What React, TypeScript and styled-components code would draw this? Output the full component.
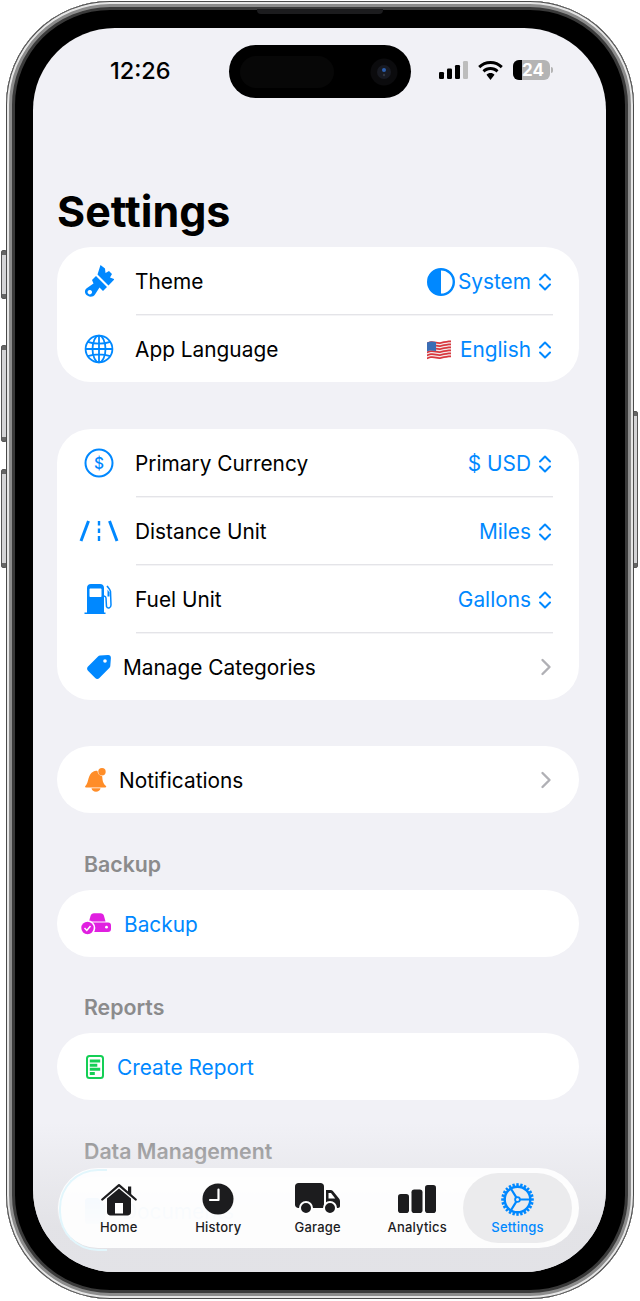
import React from "react";
import styled, { createGlobalStyle } from "styled-components";

const BLUE = "#0088ff";
const FONT = `Inter, "Noto Sans", "Liberation Sans", sans-serif`;

const Global = createGlobalStyle`
  html, body { margin: 0; padding: 0; background: #fff; }
  #root { width: 640px; height: 1301px; overflow: hidden; }
  * { box-sizing: border-box; }
`;

const Stage = styled.div`
  position: relative;
  width: 640px;
  height: 1301px;
  padding: 1px 6px 2px 6px;
  font-family: ${FONT};
  background: #fff;
`;

const SideButton = styled.div<{ $top: number; $height: number; $right?: boolean }>`
  position: absolute;
  top: ${(p) => p.$top}px;
  height: ${(p) => p.$height}px;
  ${(p) => (p.$right ? "right: 2px;" : "left: 1px;")}
  width: 6px;
  background: linear-gradient(#666 0 4px, #d4d4d6 4px calc(100% - 4px), #666 calc(100% - 4px));
  border: 1px solid #555;
  border-radius: 2px;
`;

const Frame = styled.div`
  position: relative;
  height: 100%;
  padding: 27px 28px 27px 27px;
  border-radius: 104px;
  background: #000;
  box-shadow: inset 0 0 0 1px #4a4a4a, inset 0 0 0 3px #e6e6e6, inset 0 0 0 6px #8c8c8c, inset 0 0 0 9px #3a3a3a;
`;

const Speaker = styled.div`
  position: absolute;
  top: 8px;
  left: 251px;
  width: 126px;
  height: 5px;
  background: #1c1c1e;
  border-radius: 0 0 4px 4px;
`;

const Screen = styled.div`
  position: relative;
  height: 100%;
  overflow: hidden;
  border-radius: 82px;
  background: #f1f1f6;
`;

const Island = styled.div`
  position: absolute;
  top: 17px;
  left: 196px;
  width: 182px;
  height: 53px;
  display: flex;
  align-items: center;
  justify-content: space-between;
  padding: 0 13px 0 11px;
  border-radius: 27px;
  background: #000;
`;

const IslandShade = styled.div`
  width: 94px;
  height: 32px;
  border-radius: 16px;
  background: #070707;
`;

const StatusBar = styled.div`
  height: 86px;
  display: flex;
  align-items: center;
  padding: 0 53px 0 77px;
  justify-content: space-between;
`;

const Clock = styled.div`
  font-size: 23.5px;
  font-weight: 500;
  letter-spacing: 0;
  color: #000;
  margin-top: -2px;
`;

const StatusIcons = styled.div`
  display: flex;
  align-items: center;
  gap: 10px;
  margin-top: -2px;
`;

const Battery = styled.div`
  position: relative;
  width: 37px;
  height: 20px;
  border-radius: 6px;
  overflow: hidden;
  background: #b4b4b4;
  color: #fff;
  font-size: 17px;
  font-weight: 700;
  line-height: 20px;
  text-align: center;
  padding-left: 3px;
`;

const BatteryFill = styled.div`
  position: absolute;
  left: 0;
  top: 0;
  bottom: 0;
  width: 9px;
  background: #000;
`;

const BatteryCap = styled.div`
  width: 2px;
  height: 6px;
  margin-left: -9px;
  border-radius: 0 2px 2px 0;
  background: #b4b4b4;
`;

const Content = styled.div`
  padding: 0 27px 0 24px;
`;

const Title = styled.h1`
  margin: 0 0 10px;
  height: 123px;
  display: flex;
  align-items: flex-end;
  font-size: 43px;
  line-height: 52px;
  font-weight: 700;
  letter-spacing: 0;
  color: #000;
`;

const Card = styled.div<{ $gap?: number }>`
  margin-bottom: ${(p) => p.$gap ?? 0}px;
  background: #fff;
  border-radius: 34px;
`;

const Row = styled.div<{ $inset: number; $gap: number }>`
  height: 67px;
  display: flex;
  align-items: center;
  padding: 0 27px 0 ${(p) => p.$inset}px;
  gap: ${(p) => p.$gap}px;
`;

const IconSlot = styled.div<{ $w: number }>`
  width: ${(p) => p.$w}px;
  flex: none;
  display: flex;
  justify-content: center;
  align-items: center;
  svg { display: block; flex: none; }
`;

const Label = styled.span<{ $blue?: boolean }>`
  flex: 1;
  padding-top: 3px;
  font-size: 20.85px;
  line-height: 26px;
  color: ${(p) => (p.$blue ? BLUE : "#000")};
`;

const Value = styled.span`
  display: flex;
  align-items: center;
  padding-top: 3px;
  font-size: 20.85px;
  line-height: 26px;
  color: ${BLUE};
`;

const ValueIcon = styled.span<{ $gap: number }>`
  display: flex;
  margin-right: ${(p) => p.$gap}px;
`;

const Trail = styled.span`
  display: flex;
  width: 21px;
  justify-content: flex-end;
  flex: none;
`;

const Divider = styled.div`
  height: 1px;
  margin: 0 26px 0 79px;
  background: #e4e4e8;
  box-shadow: 0 1px 0 #f4f4f6;
`;

const Section = styled.div<{ $top: number }>`
  margin: ${(p) => p.$top}px 0 14px 27px;
  font-size: 21.3px;
  line-height: 24px;
  font-weight: 600;
  color: #8b8b8c;
`;

const BottomFade = styled.div`
  position: absolute;
  left: 0;
  right: 0;
  bottom: 0;
  height: 150px;
  background: linear-gradient(rgba(226, 226, 230, 0), rgba(226, 226, 230, 0.95) 70%);
`;

const TabBar = styled.nav`
  position: absolute;
  left: 25px;
  top: 1140px;
  width: 521px;
  height: 80px;
  padding: 5px 6px 5px 11px;
  display: grid;
  grid-template-columns: repeat(5, 99.5px);
  border-radius: 40px;
  background: rgba(255, 255, 255, 0.9);
  &::before {
    content: "";
    position: absolute;
    left: 1px;
    top: 1px;
    width: 46px;
    height: 78px;
    border: 2px solid #e2f6fc;
    border-right: none;
    border-radius: 39px 0 0 39px;
  }
`;

const Tab = styled.div<{ $active?: boolean }>`
  position: relative;
  display: flex;
  flex-direction: column;
  align-items: center;
  padding-top: 10px;
  border-radius: 35px;
  margin: ${(p) => (p.$active ? "0 -5.5px 0 -4px" : "0")};
  background: ${(p) => (p.$active ? "#ebebed" : "transparent")};
  color: ${(p) => (p.$active ? BLUE : "#1c1c1e")};
`;

const TabIcon = styled.div`
  height: 32px;
  display: flex;
  align-items: center;
  justify-content: center;
  svg { display: block; }
`;

const TabLabel = styled.span`
  margin-top: 3px;
  font-size: 13px;
  line-height: 18px;
  font-weight: 500;
  letter-spacing: 0.2px;
`;

const UpDown = () => (
  <svg width="14" height="20" viewBox="0 0 14 20" fill="none" stroke={BLUE} strokeWidth="2" strokeLinecap="round" strokeLinejoin="round">
    <path d="M2 7.500 7 2.500l5 5M2 12.500l5 5 5-5" />
  </svg>
);

const Chevron = () => (
  <svg width="12" height="18" viewBox="0 0 12 18" fill="none" stroke="#b0b0b5" strokeWidth="2.400" strokeLinecap="round" strokeLinejoin="round">
    <path d="M2.500 2 9.500 9l-7 7" />
  </svg>
);

const Brush = () => (
  <svg width="30" height="32" viewBox="0 0 30 32" fill={BLUE}>
    <path d="M16.500 0 21 3.500l.5 4.500 3.500-2 3 3-2 3.500 4.500 1.700L24.500 20.500 13.500 9.500z" />
    <path d="M12 11 23 22l-4 4-3.500-3.500-4.500 7c-1.600 2.400-5 3-7.300 1.200C.2 28.800.2 25.200 2.700 23.300L9.500 18.500 8 15zM5.800 25a2.200 2.200 0 1 0 .01 0z" fillRule="evenodd" />
  </svg>
);

const Globe = () => (
  <svg width="30" height="30" viewBox="0 0 30 30" fill="none" stroke={BLUE} strokeWidth="1.800">
    <circle cx="15" cy="15" r="13.400" />
    <ellipse cx="15" cy="15" rx="6.500" ry="13.400" />
    <path d="M15 1.600v26.800M1.600 15h26.800M3.800 7.800c6.500 2.500 15.900 2.500 22.400 0M3.800 22.200c6.500-2.500 15.900-2.500 22.400 0" />
  </svg>
);

const HalfCircle = () => (
  <svg width="28" height="28" viewBox="0 0 28 28">
    <circle cx="14" cy="14" r="12.800" fill="#fff" stroke={BLUE} strokeWidth="2.400" />
    <path d="M14 1a13 13 0 0 0 0 26z" fill={BLUE} />
  </svg>
);

const Flag = () => {
  const stripes = Array.from({ length: 6 }, (_, i) => i * 3);
  return (
    <svg width="24" height="20" viewBox="0 0 24 20">
      <path d="M0 2.500C6-.5 10 3 14 2s7-1.500 10-1.500V17c-4 0-6 1.500-10 2S5 16 0 18.500z" fill="#f4e8e8" />
      {stripes.map((y) => (
        <path key={y} d={`M0 ${y + 2.5}C6 ${y - 0.5} 10 ${y + 3} 14 ${y + 2}s7-1.500 10-1.500v1.700c-3 0-6 .5-10 1.500s-8-2.500-14 .5z`} fill="#d8383f" />
      ))}
      <path d="M0 2.500C3 1 5.500 1.200 9 2v9c-4-.7-6-1-9 .5z" fill="#3a6db5" />
    </svg>
  );
};

const Dollar = () => (
  <svg width="30" height="30" viewBox="0 0 30 30" fill="none" stroke={BLUE}>
    <circle cx="15" cy="15" r="13.500" strokeWidth="2" />
    <text x="15" y="20.500" textAnchor="middle" fontSize="15.500" fontFamily={FONT} fontWeight="500" fill={BLUE} stroke="none">$</text>
  </svg>
);

const Road = () => (
  <svg width="40" height="22" viewBox="0 0 40 22" fill="none" stroke={BLUE} strokeLinecap="butt">
    <path d="M9.500 1 2 21M30.500 1 38 21" strokeWidth="3" />
    <path d="M20 1v4.500M20 8.500v4.500M20 16v5" strokeWidth="2.400" />
  </svg>
);

const Fuel = () => (
  <svg width="30" height="32" viewBox="0 0 30 32">
    <path d="M3 5c0-2.500 1.500-4 4-4h9c2.500 0 4 1.500 4 4v24.500h1.500V31H.5v-1.500H3z" fill={BLUE} />
    <path d="M6.500 5.500h10c.6 0 1 .4 1 1V13c0 .6-.4 1-1 1h-10c-.6 0-1-.4-1-1V6.500c0-.6.4-1 1-1z" fill="#fff" />
    <path d="M23 3c1.500 2 3 3 3.500 5.500L27 22c0 3.500-3.500 4-4.500 1.500L22 15c0-1-.8-1.800-2-2" fill="none" stroke={BLUE} strokeWidth="1.500" />
    <path d="M23.500 6.500l2 3v4h-2z" fill={BLUE} />
  </svg>
);

const Tag = () => (
  <svg width="26" height="26" viewBox="0 0 26 26">
    <path d="M14 1.500 22 1c1.800-.1 3 1.200 2.900 3l-.6 8c0 .8-.4 1.500-1 2.100L13.400 24c-1.200 1.200-3 1.200-4.200 0L2 16.800c-1.200-1.200-1.200-3 0-4.200l10-10c.6-.6 1.300-1 2-1.100z" fill={BLUE} />
    <circle cx="19" cy="7" r="1.800" fill="#fff" />
  </svg>
);

const Bell = () => (
  <svg width="22" height="24" viewBox="0 0 22 24" fill="#ff8d28">
    <path d="M8.500 3.500c1.200-.6 2.500-.8 4-.5.200 2.700 2 4.800 4.700 5.200.4 4.300.5 7 3.800 9.800.5.500.2 1.500-.6 1.500H1c-.9 0-1.200-1-.6-1.500C4 14.500 2.500 6.500 8.500 3.500z" />
    <circle cx="17" cy="3.700" r="3.700" />
    <path d="M6.500 20.200h9c-.3 2-2.300 3.500-4.500 3.500s-4.200-1.500-4.500-3.500z" />
  </svg>
);

const BackupIcon = () => (
  <svg width="30" height="22" viewBox="0 0 30 22">
    <path d="M9.500 3c.5-1.800 1.800-2.800 3.500-2.800h6.500c1.800 0 3 1 3.500 2.800l1.500 5.500H8z" fill="#e01fe0" />
    <rect x="6" y="9.500" width="24" height="9.500" rx="3" fill="#e01fe0" />
    <circle cx="25.500" cy="14.200" r="1.400" fill="#fff" />
    <circle cx="6.500" cy="15" r="7.800" fill="#fff" />
    <circle cx="6.500" cy="15" r="6.200" fill="#e01fe0" />
    <path d="M3.500 15l2.300 2.400 3.700-4.400" fill="none" stroke="#fff" strokeWidth="1.500" />
  </svg>
);

const ReportIcon = () => (
  <svg width="18" height="24" viewBox="0 0 18 24">
    <rect x="1" y="1" width="16" height="22" rx="2.500" fill="#fff" stroke="#14cf55" strokeWidth="2" />
    <path d="M3.800 4.500h10.400v3H3.800zM3.800 8.800h7.500v3H3.800zM3.800 12.800h10.400v3H3.800zM3.800 17h5v3h-5z" fill="#14cf55" />
  </svg>
);

const DocIcon = () => (
  <svg width="20" height="26" viewBox="0 0 20 26">
    <path d="M3 0h10l7 7v16c0 1.700-1.300 3-3 3H3c-1.700 0-3-1.300-3-3V3c0-1.700 1.300-3 3-3z" fill={BLUE} />
  </svg>
);

const Home = () => (
  <svg width="36" height="33" viewBox="0 0 36 33">
    <path d="M6 15.500 18 5.500l12 10V29c0 2.200-1.500 3.500-3.500 3.500h-17C7.500 32.500 6 31.200 6 29z" fill="#1c1c1e" />
    <rect x="14" y="20" width="8" height="10.500" fill="#fff" />
    <path d="M1.300 16.500 18 2.200l16.700 14.300" fill="none" stroke="#1c1c1e" strokeWidth="2.300" strokeLinecap="round" strokeLinejoin="round" />
    <path d="M27 3.500h3.200v8.500L27 9.500z" fill="#1c1c1e" />
  </svg>
);

const ClockIcon = () => (
  <svg width="32" height="32" viewBox="0 0 32 32">
    <circle cx="16" cy="16" r="15.500" fill="#1c1c1e" />
    <path d="M16.500 6.500V17H8" fill="none" stroke="#fff" strokeWidth="2.200" strokeLinecap="round" strokeLinejoin="round" />
  </svg>
);

const Truck = () => (
  <svg width="46" height="32" viewBox="0 0 46 32">
    <path d="M3.500 0h22C27.500 0 29 1.500 29 3.500V25H3.500C1.500 25 0 23.500 0 21.500v-18C0 1.500 1.500 0 3.500 0z" fill="#1c1c1e" />
    <path d="M31 7h4.500c1 0 1.800.4 2.400 1.100L44 15.500c.7.800 1 1.700 1 2.700V23c0 1.200-.8 2-2 2H31z" fill="#1c1c1e" />
    <path d="M33.500 10h2.500l4.200 5.500h-6.700z" fill="#fff" />
    <circle cx="11" cy="25" r="6" fill="#1c1c1e" stroke="#fff" strokeWidth="2" />
    <circle cx="35" cy="25" r="6" fill="#1c1c1e" stroke="#fff" strokeWidth="2" />
  </svg>
);

const Bars = () => (
  <svg width="38" height="28" viewBox="0 0 38 28" fill="#1c1c1e">
    <rect x="0" y="9" width="11" height="19" rx="2.800" />
    <rect x="13.500" y="4.500" width="11" height="23.500" rx="2.800" />
    <rect x="27" y="0" width="11" height="28" rx="2.800" />
  </svg>
);

const Gear = () => {
  const teeth = Array.from({ length: 24 }, (_, i) => i * 15);
  return (
    <svg width="33" height="33" viewBox="0 0 33 33" fill="none" stroke={BLUE}>
      {teeth.map((a) => (
        <rect key={a} x="15.300" y="0.200" width="2.400" height="4" fill={BLUE} stroke="none" transform={`rotate(${a} 16.500 16.500)`} />
      ))}
      <circle cx="16.500" cy="16.500" r="12.800" strokeWidth="2.400" />
      <circle cx="16.500" cy="16.500" r="2.400" strokeWidth="1.800" />
      <path d="M18.900 16.500H29M15.300 14.400 9.800 5.500M15.300 18.600 9.800 27.500" strokeWidth="2.200" />
    </svg>
  );
};

const Signal = () => (
  <svg width="29" height="18" viewBox="0 0 29 18">
    <rect x="0" y="11" width="5" height="7" rx="1.200" fill="#000" />
    <rect x="8" y="7.500" width="5" height="10.500" rx="1.200" fill="#000" />
    <rect x="16" y="4" width="5" height="14" rx="1.200" fill="#000" />
    <rect x="24" y="0" width="5" height="18" rx="1.200" fill="#bdbdbd" />
  </svg>
);

const Wifi = () => (
  <svg width="25" height="19" viewBox="0 0 25 19">
    <path d="M12.500 0C17.300 0 21.600 1.900 24.800 5l-2 2.200C20.100 4.600 16.500 3 12.500 3S4.900 4.600 2.200 7.200L.2 5C3.400 1.900 7.700 0 12.500 0z" />
    <path d="M12.500 6c3.100 0 5.900 1.200 8 3.200l-2 2.200c-1.500-1.500-3.600-2.400-6-2.400s-4.500.9-6 2.400l-2-2.200c2.100-2 4.900-3.200 8-3.200z" />
    <path d="M12.500 12c1.600 0 3 .6 4 1.700L12.500 19l-4-5.300c1-1.100 2.400-1.700 4-1.700z" />
  </svg>
);

const Camera = () => (
  <svg width="28" height="28" viewBox="0 0 28 28">
    <circle cx="14" cy="14" r="13.500" fill="#0b0b0d" />
    <circle cx="14" cy="14" r="7" fill="#181a22" />
    <circle cx="14" cy="12" r="2" fill="#2c5fb0" />
    <circle cx="14" cy="17" r="1.200" fill="#33363d" />
  </svg>
);

export default function App() {
  return (
    <Stage>
      <Global />
      <SideButton $top={250} $height={49} />
      <SideButton $top={345} $height={97} />
      <SideButton $top={469} $height={99} />
      <SideButton $right $top={411} $height={157} />
      <Frame>
        <Speaker />
        <Screen>
          <StatusBar>
            <Clock>12:26</Clock>
            <StatusIcons>
              <Signal />
              <Wifi />
              <Battery>
                <BatteryFill />
                24
              </Battery>
              <BatteryCap />
            </StatusIcons>
          </StatusBar>
          <Island>
            <IslandShade />
            <Camera />
          </Island>
          <Content>
            <Title>Settings</Title>
            <Card $gap={47}>
              <Row $inset={22} $gap={16}>
                <IconSlot $w={40}><Brush /></IconSlot>
                <Label>Theme</Label>
                <Value><ValueIcon $gap={3}><HalfCircle /></ValueIcon>System<Trail><UpDown /></Trail></Value>
              </Row>
              <Divider />
              <Row $inset={22} $gap={16}>
                <IconSlot $w={40}><Globe /></IconSlot>
                <Label>App Language</Label>
                <Value><ValueIcon $gap={9}><Flag /></ValueIcon>English<Trail><UpDown /></Trail></Value>
              </Row>
            </Card>
            <Card $gap={46}>
              <Row $inset={22} $gap={16}>
                <IconSlot $w={40}><Dollar /></IconSlot>
                <Label>Primary Currency</Label>
                <Value>$ USD<Trail><UpDown /></Trail></Value>
              </Row>
              <Divider />
              <Row $inset={22} $gap={16}>
                <IconSlot $w={40}><Road /></IconSlot>
                <Label>Distance Unit</Label>
                <Value>Miles<Trail><UpDown /></Trail></Value>
              </Row>
              <Divider />
              <Row $inset={22} $gap={16}>
                <IconSlot $w={40}><Fuel /></IconSlot>
                <Label>Fuel Unit</Label>
                <Value>Gallons<Trail><UpDown /></Trail></Value>
              </Row>
              <Divider />
              <Row $inset={29} $gap={11}>
                <IconSlot $w={26}><Tag /></IconSlot>
                <Label>Manage Categories</Label>
                <Trail><Chevron /></Trail>
              </Row>
            </Card>
            <Card>
              <Row $inset={28} $gap={12}>
                <IconSlot $w={22}><Bell /></IconSlot>
                <Label>Notifications</Label>
                <Trail><Chevron /></Trail>
              </Row>
            </Card>
            <Section $top={39}>Backup</Section>
            <Card>
              <Row $inset={24} $gap={13}>
                <IconSlot $w={30}><BackupIcon /></IconSlot>
                <Label $blue>Backup</Label>
              </Row>
            </Card>
            <Section $top={38}>Reports</Section>
            <Card>
              <Row $inset={29} $gap={13}>
                <IconSlot $w={18}><ReportIcon /></IconSlot>
                <Label $blue>Create Report</Label>
              </Row>
            </Card>
            <Section $top={39}>Data Management</Section>
            <Card>
              <Row $inset={28} $gap={17}>
                <IconSlot $w={20}><DocIcon /></IconSlot>
                <Label $blue>Documents</Label>
              </Row>
            </Card>
          </Content>
          <BottomFade />
          <TabBar>
            <Tab><TabIcon><Home /></TabIcon><TabLabel>Home</TabLabel></Tab>
            <Tab><TabIcon><ClockIcon /></TabIcon><TabLabel>History</TabLabel></Tab>
            <Tab><TabIcon><Truck /></TabIcon><TabLabel>Garage</TabLabel></Tab>
            <Tab><TabIcon><Bars /></TabIcon><TabLabel>Analytics</TabLabel></Tab>
            <Tab $active><TabIcon><Gear /></TabIcon><TabLabel>Settings</TabLabel></Tab>
          </TabBar>
        </Screen>
      </Frame>
    </Stage>
  );
}
